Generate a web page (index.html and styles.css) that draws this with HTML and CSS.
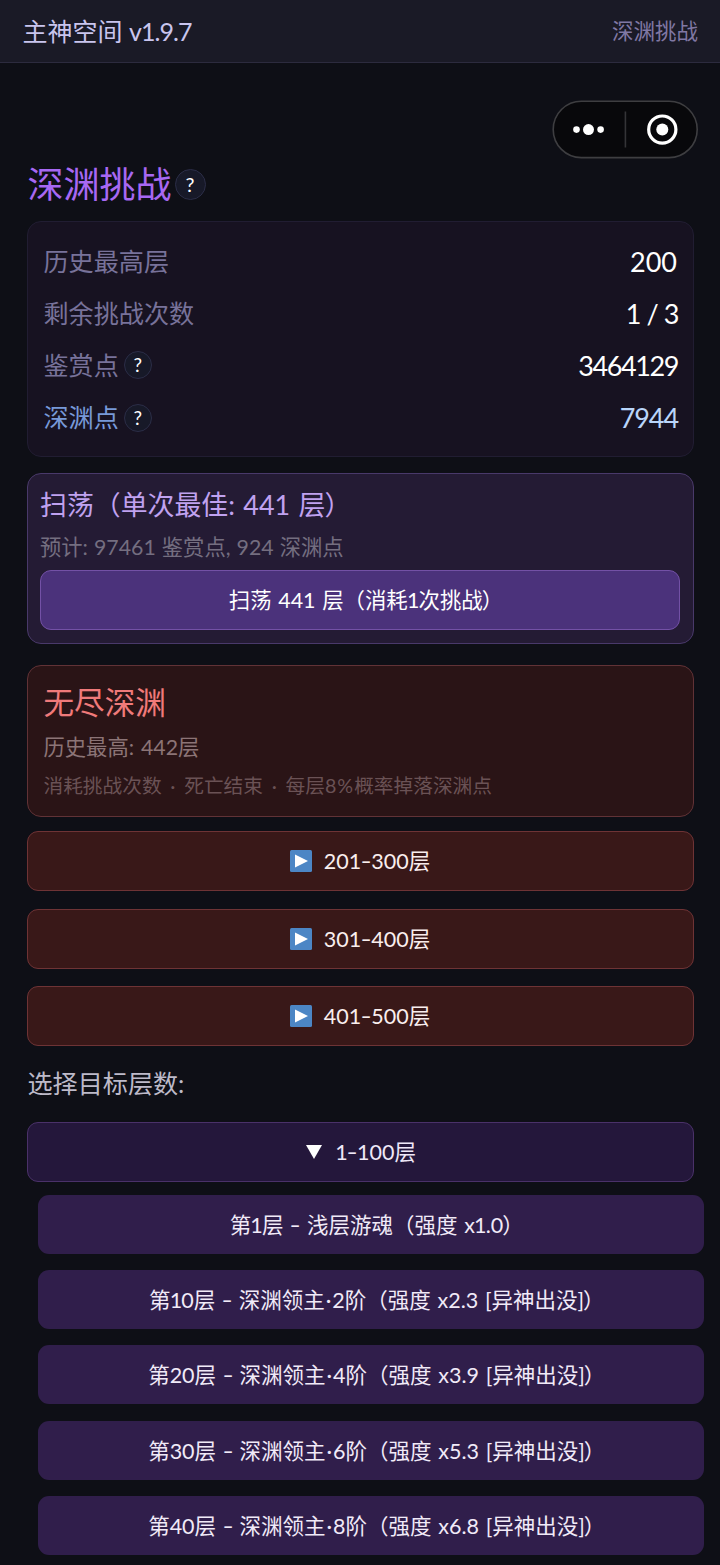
FILE: index.html
```html
<!DOCTYPE html>
<html lang="zh-CN">
<head>
<meta charset="utf-8">
<title>主神空间</title>
<link rel="stylesheet" href="styles.css">
</head>
<body>
<header class="topbar">
  <span class="brand">主神空间 <span class="ver">v1.9.7</span></span>
  <span class="crumb">深渊挑战</span>
</header>
<div class="capsule">
  <svg width="146" height="59" viewBox="0 0 146 59">
    <rect x="1.2" y="1.2" width="144" height="56.4" rx="28.2" fill="#08080b" stroke="#3e3e41" stroke-width="1.6"/>
    <circle cx="24.5" cy="29.6" r="3.3" fill="#fff"/>
    <circle cx="36.5" cy="29.6" r="5.5" fill="#fff"/>
    <circle cx="48.6" cy="29.6" r="3.3" fill="#fff"/>
    <path d="M73.4 11.5V47.5" stroke="#343437" stroke-width="1.6"/>
    <circle cx="110.3" cy="29.6" r="13.6" fill="none" stroke="#fff" stroke-width="3.2"/>
    <circle cx="110.3" cy="29.6" r="6" fill="#fff"/>
  </svg>
</div>
<main class="page">
  <h1 class="title"><span class="title-text">深渊挑战</span><span class="help help-lg">?</span></h1>

  <section class="stats">
    <div class="row"><span class="label">历史最高层</span><span class="value">200</span></div>
    <div class="row"><span class="label">剩余挑战次数</span><span class="value ratio">1 / 3</span></div>
    <div class="row"><span class="label">鉴赏点</span><span class="help">?</span><span class="value long">3464129</span></div>
    <div class="row abyss"><span class="label">深渊点</span><span class="help">?</span><span class="value long">7944</span></div>
  </section>

  <section class="sweep">
    <div class="sweep-title">扫荡（单次最佳: 441 层<i class="close">）</i></div>
    <div class="sweep-note">预计: 97461 鉴赏点, 924 深渊点</div>
    <div class="sweep-btn"><span class="fit">扫荡 441 层（消耗<i class="lead">1</i>次挑战<i class="close">）</i></span></div>
  </section>

  <section class="endless">
    <div class="endless-title">无尽深渊</div>
    <div class="endless-best">历史最高: 442层</div>
    <div class="endless-note">消耗挑战次数 · 死亡结束 · 每层<i class="pct">8%</i>概率掉落深渊点</div>
  </section>

  <div class="ranges">
    <div class="range"><svg class="play" viewBox="0 0 22 22"><rect width="22" height="22" rx="1.5" fill="#4c86c5"/><path d="M5 4.5L18 11L5 17.5Z" fill="#fff"/></svg><span>201<i class="dash">-</i>300层</span></div>
    <div class="range"><svg class="play" viewBox="0 0 22 22"><rect width="22" height="22" rx="1.5" fill="#4c86c5"/><path d="M5 4.5L18 11L5 17.5Z" fill="#fff"/></svg><span>301<i class="dash">-</i>400层</span></div>
    <div class="range"><svg class="play" viewBox="0 0 22 22"><rect width="22" height="22" rx="1.5" fill="#4c86c5"/><path d="M5 4.5L18 11L5 17.5Z" fill="#fff"/></svg><span>401<i class="dash">-</i>500层</span></div>
  </div>

  <div class="pick">选择目标层数:</div>
  <div class="toggle"><svg class="down" viewBox="0 0 16 14"><path d="M0 0H16L8 14Z" fill="#fff"/></svg><span><i class="lead">1</i><i class="dash">-</i>100层</span></div>

  <div class="floors">
    <div class="floor"><span class="fit">第<i class="lead">1</i>层 <i class="dash">-</i> 浅层游魂（强度 x<i class="lead">1</i>.0<i class="close">）</i></span></div>
    <div class="floor"><span class="fit">第<i class="lead">1</i>0层 <i class="dash">-</i> 深渊领主<i class="dot">·</i>2阶（强度 x2.3 [异神出没]<i class="close">）</i></span></div>
    <div class="floor"><span class="fit">第20层 <i class="dash">-</i> 深渊领主<i class="dot">·</i>4阶（强度 x3.9 [异神出没]<i class="close">）</i></span></div>
    <div class="floor"><span class="fit">第30层 <i class="dash">-</i> 深渊领主<i class="dot">·</i>6阶（强度 x5.3 [异神出没]<i class="close">）</i></span></div>
    <div class="floor"><span class="fit">第40层 <i class="dash">-</i> 深渊领主<i class="dot">·</i>8阶（强度 x6.8 [异神出没]<i class="close">）</i></span></div>
  </div>
</main>
</body>
</html>
```
FILE: styles.css
```css
* { box-sizing: border-box; }
body {
  margin: 0;
  width: 720px;
  height: 1565px;
  overflow: hidden;
  background: #0e0f16;
  color: #f1eaf8;
  font-family: Lato, "Noto Sans CJK SC", sans-serif;
  font-weight: 400;
  white-space: nowrap;
}
i { font-style: normal; }
.topbar {
  display: flex;
  justify-content: space-between;
  align-items: center;
  height: 63px;
  padding: 0 22px 1px 22.5px;
  background: #1a1a26;
  border-bottom: 1.5px solid #2c2b3e;
}
.brand { font-size: 25px; line-height: 36px; color: #c9c5ee; }
.ver { letter-spacing: -.9px; }
.crumb { font-size: 21.5px; line-height: 32px; color: #8078a4; }
.capsule { position: absolute; top: 100px; left: 552px; height: 59px; }
.capsule svg { display: block; }
.page { padding: 97px 26.5px 0; }
.title {
  display: flex;
  align-items: center;
  gap: 3px;
  height: 48px;
  margin: 0 0 12.5px;
  padding-left: 1px;
  font-size: 36px;
  line-height: 48px;
  font-weight: 400;
  color: #a768f3;
}
.help {
  display: flex;
  align-items: center;
  justify-content: center;
  width: 28px;
  height: 28px;
  margin-left: 5px;
  border: 1.5px solid #2b2d47;
  border-radius: 50%;
  background: #171928;
  color: #fff;
  font-size: 19px;
  line-height: 24px;
}
.help-lg { width: 31px; height: 31px; margin-left: 0; font-size: 20px; }
.stats {
  height: 236px;
  padding: 13.5px 15.5px 13px 16px;
  border: 1.5px solid #211d32;
  border-radius: 14px;
  background: #171221;
}
.row { display: flex; align-items: center; height: 52.2px; font-size: 25.1px; color: #78729a; }
.label { margin-bottom: 3px; }
.value { margin-left: auto; color: #fff; font-size: 27px; }
.ratio { letter-spacing: -1.4px; word-spacing: 1px; margin-right: -1px; }
.long { letter-spacing: -1.4px; margin-right: -1px; }
.abyss { color: #7799d8; }
.abyss .value { color: #b9d5fa; letter-spacing: -1.1px; }
.sweep {
  height: 171px;
  margin-top: 16px;
  padding: 12px 12.5px 0;
  border: 1.5px solid #49396a;
  border-radius: 14px;
  background: #241b34;
}
.sweep-title { font-size: 26.9px; line-height: 38px; word-spacing: 1.5px; color: #c0a2f0; }
.sweep-note { font-size: 21.3px; line-height: 32px; margin-top: 7px; word-spacing: .6px; color: #746e80; }
.sweep-btn {
  display: flex;
  align-items: center;
  justify-content: center;
  height: 60px;
  margin-top: 7px;
  padding-bottom: 2px;
  border: 1.5px solid #7351a6;
  border-radius: 11px;
  background: #4b327b;
  color: #fff;
  font-size: 21.4px;
}
.fit { margin-right: -12px; word-spacing: 1.2px; }
.lead { margin: 0 -.8px; }
.close { margin-left: -1px; }
.endless {
  height: 152px;
  margin-top: 21px;
  padding: 17.5px 16px 0;
  border: 1.5px solid #613236;
  border-radius: 14px;
  background: #2a1416;
}
.endless-title { font-size: 30.6px; line-height: 40px; color: #f07a7a; }
.endless-best { font-size: 21.3px; line-height: 32px; margin-top: 8px; word-spacing: 1.5px; color: #8c7476; }
.endless-note { font-size: 19.7px; line-height: 30px; margin-top: 8px; word-spacing: 3.7px; color: #6a5255; }
.pct { letter-spacing: 1px; }
.ranges { display: grid; gap: 17.5px; margin-top: 14.5px; }
.range, .toggle {
  display: flex;
  align-items: center;
  justify-content: center;
  height: 60px;
  border: 1.5px solid #6e3335;
  border-radius: 11px;
  background: #391818;
  color: #f9eeee;
  font-size: 21.5px;
}
.range span, .toggle span { margin-bottom: 3px; }
.play { width: 22px; height: 22px; margin-right: 12px; }
.dash { display: inline-block; transform: scaleX(1.4); margin: 0 1px; }
.dot { margin: 0 1px; }
.pick { margin-top: 19px; padding-left: 1px; font-size: 25.1px; line-height: 36px; color: #bdbac9; }
.toggle { margin-top: 20.5px; padding-left: 2px; border-color: #4a3169; background: #24173b; color: #efe8f8; }
.down { width: 16px; height: 14px; margin-right: 14px; }
.floors { display: grid; gap: 16.3px; margin: 13.4px -10.5px 0 11px; }
.floor {
  display: flex;
  align-items: center;
  justify-content: center;
  height: 59px;
  padding-bottom: 2px;
  border-radius: 11px;
  background: #301e4b;
  font-size: 21.5px;
}
```
